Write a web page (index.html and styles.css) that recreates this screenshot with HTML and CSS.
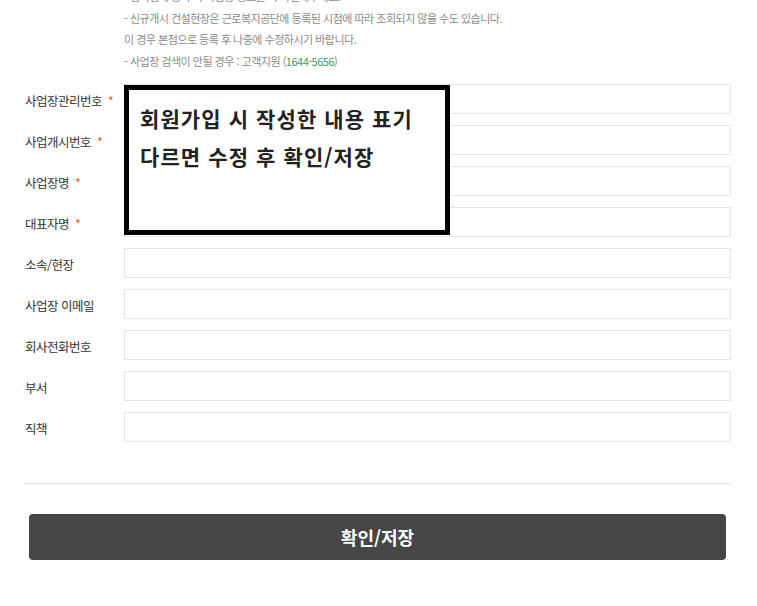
FILE: index.html
```html
<!DOCTYPE html>
<html lang="ko">
<head>
<meta charset="utf-8">
<title>사업장 정보</title>
<link rel="stylesheet" href="styles.css">
</head>
<body>
<div class="page">
  <div class="notice">
    <p>- 협력업체 등록 시 사업장 정보를 꼭 확인해주세요.</p>
    <p>- 신규개시 건설현장은 근로복지공단에 등록된 시점에 따라 조회되지 않을 수도 있습니다.</p>
    <p>이 경우 본점으로 등록 후 나중에 수정하시기 바랍니다.</p>
    <p>- 사업장 검색이 안될 경우 : 고객지원 (<span class="tel">1644-5656</span>)</p>
  </div>
  <div class="form">
    <div class="row"><label class="label">사업장관리번호 <span class="req">*</span></label><input class="field" type="text"></div>
    <div class="row"><label class="label">사업개시번호 <span class="req">*</span></label><input class="field" type="text"></div>
    <div class="row"><label class="label">사업장명 <span class="req">*</span></label><input class="field" type="text"></div>
    <div class="row"><label class="label">대표자명 <span class="req">*</span></label><input class="field" type="text"></div>
    <div class="row"><label class="label">소속/현장</label><input class="field" type="text"></div>
    <div class="row"><label class="label">사업장 이메일</label><input class="field" type="text"></div>
    <div class="row"><label class="label">회사전화번호</label><input class="field" type="text"></div>
    <div class="row"><label class="label">부서</label><input class="field" type="text"></div>
    <div class="row"><label class="label">직책</label><input class="field" type="text"></div>
    <div class="callout">
      <p>회원가입 시 작성한 내용 표기</p>
      <p>다르면 수정 후 확인/저장</p>
    </div>
  </div>
  <hr class="divider">
  <button class="submit" type="button">확인/저장</button>
</div>
</body>
</html>
```
FILE: styles.css
```css
* { box-sizing: border-box; }
html, body { margin: 0; padding: 0; background: #fff; }
body {
  font-family: "Noto Sans CJK KR", "Noto Sans", sans-serif;
  color: #333;
  overflow: hidden;
}
p { margin: 0; }
.page {
  padding: 0 26px 0 24px;
}
.notice {
  margin: -14px 0 12px 100px;
  font-size: 11px;
  line-height: 21.5px;
  letter-spacing: -0.5px;
  color: #8a8a8a;
}
.tel { color: #3a9a66; }
.form {
  position: relative;
  display: flow-root;
}
.row {
  display: flex;
  align-items: center;
  height: 30px;
  margin-bottom: 11px;
}
.label {
  width: 100px;
  flex: none;
  font-size: 12.5px;
  letter-spacing: -0.5px;
  color: #333;
  padding-left: 1px;
  padding-top: 3px;
}
.req { color: #f05a28; margin-left: 3px; }
.field {
  flex: 1;
  height: 30px;
  border: 1px solid #e4e4e4;
  background: #fff;
  margin: 0;
  padding: 0 8px;
  outline: none;
}
.callout {
  position: absolute;
  left: 100px;
  top: 1px;
  width: 326px;
  height: 150px;
  border: 5px solid #000;
  background: #fff;
  padding: 9px 0 0 11px;
  font-size: 21px;
  line-height: 38px;
  letter-spacing: 1.1px;
  font-weight: 700;
  color: #222;
}
.divider {
  margin: 30px 0 0;
  border: 0;
  border-top: 1px solid #dcdcdc;
  height: 0;
}
.submit {
  display: block;
  width: calc(100% - 10px);
  margin: 30px 5px 0;
  height: 46px;
  border: 0;
  border-radius: 4px;
  background: #464646;
  color: #fff;
  font-family: "Noto Sans CJK KR", "Noto Sans", sans-serif;
  font-size: 18px;
  font-weight: 700;
}
```
